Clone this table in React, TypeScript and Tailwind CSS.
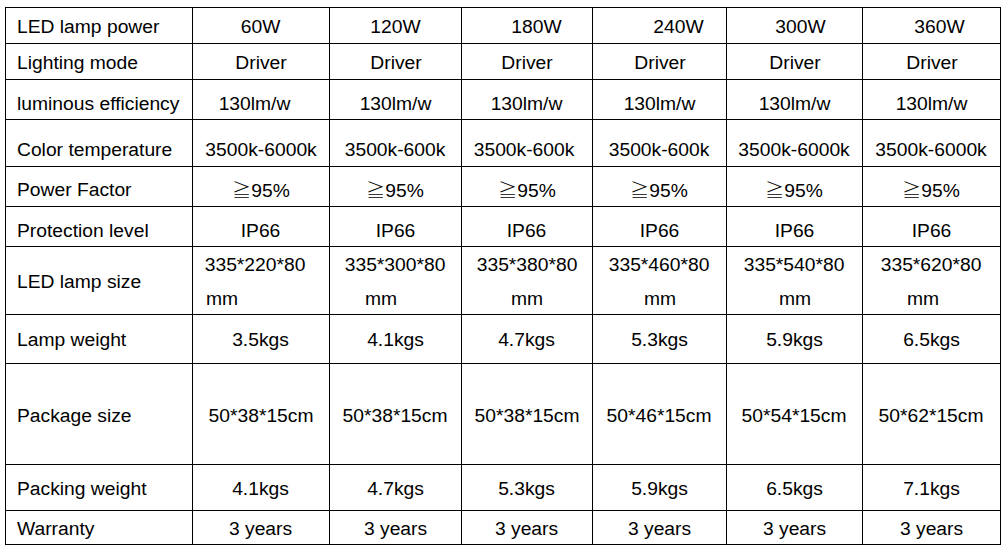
import React from "react";

type Cell = { t: React.ReactNode; c?: string };
type Row = { label: string; pad: string; cells: Cell[] };

const Ge = () => (
  <>
    <span className="font-['Noto_Sans_CJK_SC',sans-serif] font-light">≧</span>95%
  </>
);

const rows: Row[] = [
  {
    label: "LED lamp power",
    pad: "pt-[2px]",
    cells: [
      { t: "60W" },
      { t: "120W" },
      { t: "180W", c: "pl-[20px]" },
      { t: "240W", c: "pl-[38px]" },
      { t: "300W", c: "pl-[12px]" },
      { t: "360W", c: "pl-[17px]" },
    ],
  },
  {
    label: "Lighting mode",
    pad: "pt-[2px]",
    cells: [{ t: "Driver" }, { t: "Driver" }, { t: "Driver" }, { t: "Driver" }, { t: "Driver" }, { t: "Driver" }],
  },
  {
    label: "luminous efficiency",
    pad: "pt-[8px]",
    cells: [
      { t: "130lm/w", c: "pr-[12px]" },
      { t: "130lm/w" },
      { t: "130lm/w" },
      { t: "130lm/w" },
      { t: "130lm/w" },
      { t: "130lm/w" },
    ],
  },
  {
    label: "Color temperature",
    pad: "pt-[14px]",
    cells: [
      { t: "3500k-6000k" },
      { t: "3500k-600k" },
      { t: "3500k-600k", c: "pr-[6px]" },
      { t: "3500k-600k" },
      { t: "3500k-6000k" },
      { t: "3500k-6000k" },
    ],
  },
  {
    label: "Power Factor",
    pad: "pt-[6px]",
    cells: [{ t: <Ge /> }, { t: <Ge /> }, { t: <Ge /> }, { t: <Ge /> }, { t: <Ge /> }, { t: <Ge /> }],
  },
  {
    label: "Protection level",
    pad: "pt-[8px]",
    cells: [{ t: "IP66" }, { t: "IP66" }, { t: "IP66" }, { t: "IP66" }, { t: "IP66" }, { t: "IP66" }],
  },
];

const rowsBottom: Row[] = [
  {
    label: "Lamp weight",
    pad: "pt-[2px]",
    cells: [{ t: "3.5kgs" }, { t: "4.1kgs" }, { t: "4.7kgs" }, { t: "5.3kgs" }, { t: "5.9kgs" }, { t: "6.5kgs" }],
  },
  {
    label: "Package size",
    pad: "pt-[4px]",
    cells: [
      { t: "50*38*15cm" },
      { t: "50*38*15cm" },
      { t: "50*38*15cm" },
      { t: "50*46*15cm" },
      { t: "50*54*15cm" },
      { t: "50*62*15cm" },
    ],
  },
  {
    label: "Packing weight",
    pad: "pt-[2px]",
    cells: [{ t: "4.1kgs" }, { t: "4.7kgs" }, { t: "5.3kgs" }, { t: "5.9kgs" }, { t: "6.5kgs" }, { t: "7.1kgs" }],
  },
  {
    label: "Warranty",
    pad: "pt-[2px]",
    cells: [
      { t: "3 years" },
      { t: "3 years" },
      { t: "3 years" },
      { t: "3 years" },
      { t: "3 years" },
      { t: "3 years" },
    ],
  },
];

const sizes: { a: string; ca: string; cb: string }[] = [
  { a: "335*220*80", ca: "pr-[11px]", cb: "pr-[79px]" },
  { a: "335*300*80", ca: "", cb: "pr-[30px]" },
  { a: "335*380*80", ca: "", cb: "" },
  { a: "335*460*80", ca: "", cb: "" },
  { a: "335*540*80", ca: "", cb: "" },
  { a: "335*620*80", ca: "", cb: "pr-[18px]" },
];

const cellBase = "flex items-center border-r border-b border-black overflow-visible";

function Txt({ children, left }: { children: React.ReactNode; left?: boolean }) {
  return (
    <span
      className={
        "inline-block whitespace-nowrap scale-x-[1.07] " + (left ? "origin-left" : "origin-center")
      }
    >
      {children}
    </span>
  );
}

function RowCells({ row }: { row: Row }) {
  return (
    <>
      <div className={`${cellBase} justify-start pl-[11px] ${row.pad}`}>
        <Txt left>{row.label}</Txt>
      </div>
      {row.cells.map((c, i) => (
        <div key={i} className={`${cellBase} justify-center ${row.pad} ${c.c ?? ""}`}>
          <Txt>{c.t}</Txt>
        </div>
      ))}
    </>
  );
}

export default function App() {
  return (
    <div className="w-[1007px] h-[549px] bg-white overflow-hidden pt-[7px] pl-[5px] font-['Liberation_Sans',Arial,sans-serif] text-[18px] leading-[22px] text-black">
      <div className="grid w-[996px] grid-cols-[187px_137px_132px_131px_134px_136px_138px] grid-rows-[36px_36px_40px_47px_40px_40px_68px_49px_101px_46px_34px] border-l border-t border-black">
        {rows.map((r, i) => (
          <RowCells key={i} row={r} />
        ))}
        <div className={`${cellBase} justify-start pl-[11px] pt-[2px]`}>
          <Txt left>LED lamp size</Txt>
        </div>
        {sizes.map((s, i) => (
          <div key={i} className={`${cellBase} flex-col justify-center pt-[2px]`}>
            <div className={`w-full flex justify-center leading-[34px] ${s.ca}`}>
              <Txt>{s.a}</Txt>
            </div>
            <div className={`w-full flex justify-center leading-[34px] ${s.cb}`}>
              <Txt>mm</Txt>
            </div>
          </div>
        ))}
        {rowsBottom.map((r, i) => (
          <RowCells key={i} row={r} />
        ))}
      </div>
    </div>
  );
}
